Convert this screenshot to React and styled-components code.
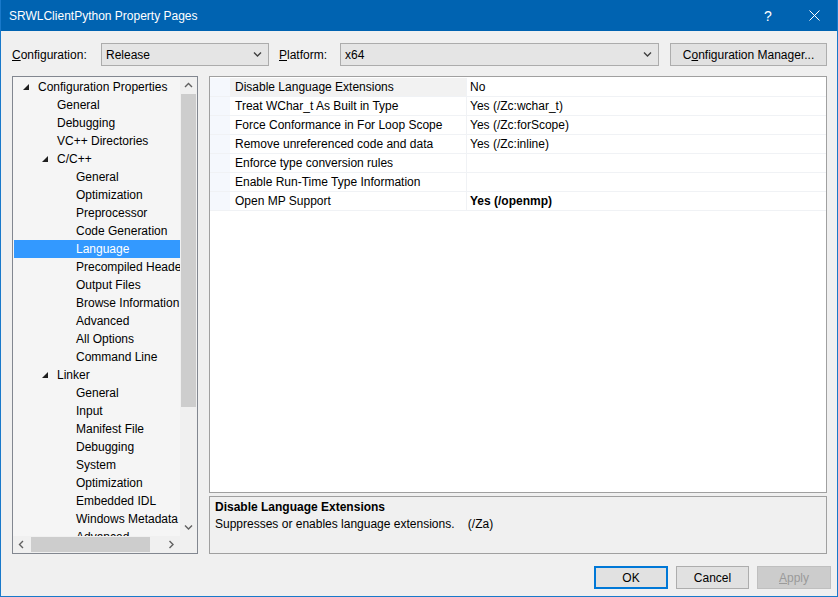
import React from "react";
import styled, { createGlobalStyle } from "styled-components";

const GlobalStyle = createGlobalStyle`
  html, body { margin: 0; padding: 0; background: #f0f0f0; }
  body {
    font-family: "Liberation Sans", Arial, sans-serif;
    font-size: 12px;
    color: #000;
  }
  * { box-sizing: border-box; }
`;

const Window = styled.div`
  width: 838px;
  height: 597px;
  display: flex;
  flex-direction: column;
  background: #f0f0f0;
  border: 1px solid #1979ca;
  border-top: none;
`;

const TitleBar = styled.div`
  height: 31px;
  flex: none;
  display: flex;
  align-items: center;
  background: #0063b1;
  color: #fff;
  padding-left: 8px;
`;

const Title = styled.div`
  flex: 1;
  font-size: 12px;
`;

const CaptionButton = styled.div`
  width: 46px;
  height: 31px;
  display: flex;
  align-items: center;
  justify-content: center;
  font-size: 14px;
  color: #fff;
`;

const Body = styled.div`
  flex: 1;
  display: flex;
  flex-direction: column;
  padding: 12px 6px 0 11px;
`;

const Toolbar = styled.div`
  display: flex;
  align-items: center;
  height: 23px;
`;

const Label = styled.div`
  width: ${(p) => p.$w}px;
  flex: none;
`;

const Combo = styled.div`
  width: ${(p) => p.$w}px;
  height: 23px;
  flex: none;
  display: flex;
  align-items: center;
  justify-content: space-between;
  padding: 0 6px 0 4px;
  background: #e5e5e5;
  border: 1px solid #acacac;
`;

const Gap = styled.div`
  width: ${(p) => p.$w}px;
  flex: none;
`;

const Button = styled.div`
  width: ${(p) => p.$w}px;
  height: 23px;
  flex: none;
  display: flex;
  align-items: center;
  justify-content: center;
  background: ${(p) => (p.$disabled ? "#cccccc" : "#e1e1e1")};
  color: ${(p) => (p.$disabled ? "#9a9a9a" : "#000")};
  border: ${(p) =>
    p.$default ? "2px solid #0078d7" : p.$disabled ? "1px solid #bfbfbf" : "1px solid #adadad"};
`;

const Main = styled.div`
  margin-top: 10px;
  height: 478px;
  display: flex;
  gap: 11px;
`;

const Tree = styled.div`
  width: 186px;
  flex: none;
  border: 1px solid #828790;
  background: #f5f5f5;
  display: grid;
  grid-template-columns: 167px 17px;
  grid-template-rows: 1fr 17px;
  overflow: hidden;
`;

const TreeList = styled.div`
  overflow: hidden;
  padding: 1px 0 0 1px;
`;

const TreeRow = styled.div`
  height: 18px;
  display: flex;
  align-items: center;
  white-space: nowrap;
  padding-left: ${(p) => p.$level * 19}px;
  background: ${(p) => (p.$selected ? "#3399ff" : "transparent")};
  color: ${(p) => (p.$selected ? "#fff" : "#000")};
`;

const Expander = styled.div`
  width: 24px;
  flex: none;
  display: flex;
  align-items: center;
  padding-left: 9px;
  padding-bottom: 1px;
`;

const VScroll = styled.div`
  background: #f0f0f0;
  display: grid;
  grid-template-rows: 17px 1fr 17px;
`;

const HScroll = styled.div`
  background: #f0f0f0;
  display: grid;
  grid-template-columns: 17px 1fr 17px;
`;

const Corner = styled.div`
  background: #f0f0f0;
`;

const Arrow = styled.div`
  display: flex;
  align-items: center;
  justify-content: center;
`;

const Track = styled.div`
  position: relative;
`;

const Thumb = styled.div`
  position: absolute;
  background: #cdcdcd;
  ${(p) =>
    p.$vertical
      ? `left: 1px; right: 1px; top: ${p.$start}px; height: ${p.$size}px;`
      : `top: 1px; bottom: 1px; left: ${p.$start}px; width: ${p.$size}px;`}
`;

const RightColumn = styled.div`
  width: 618px;
  flex: none;
  display: flex;
  flex-direction: column;
  gap: 3px;
`;

const Grid = styled.div`
  height: 417px;
  flex: none;
  background: #fff;
  border: 1px solid #a0a0a0;
  padding-top: 1px;
`;

const PropRow = styled.div`
  display: flex;
  height: 19px;
  border-bottom: 1px solid #f0f2f5;
`;

const Margin = styled.div`
  width: 20px;
  flex: none;
  background: #f5f8fd;
`;

const NameCell = styled.div`
  width: 237px;
  flex: none;
  display: flex;
  align-items: center;
  padding-left: 5px;
  white-space: nowrap;
  background: ${(p) => (p.$active ? "#f2f2f2" : "#fff")};
  border-right: 1px solid #f0f2f5;
`;

const ValueCell = styled.div`
  flex: 1;
  display: flex;
  align-items: center;
  padding-left: 3px;
  white-space: nowrap;
  font-weight: ${(p) => (p.$bold ? "bold" : "normal")};
`;

const Desc = styled.div`
  height: 58px;
  flex: none;
  border: 1px solid #a0a0a0;
  background: #f0f0f0;
  padding: 2px 5px;
  line-height: 17px;
`;

const DescTitle = styled.div`
  font-weight: bold;
`;

const DescText = styled.div`
  white-space: pre;
`;

const Footer = styled.div`
  margin-top: 12px;
  display: flex;
  justify-content: flex-end;
  gap: 8px;
`;

const Chevron = ({ dir = "down", color = "#404040" }) => {
  const paths = {
    down: "M1 1.5 L4.5 5 L8 1.5",
    up: "M1 5 L4.5 1.5 L8 5",
    left: "M5 1 L1.5 4.5 L5 8",
    right: "M1.5 1 L5 4.5 L1.5 8",
  };
  const horiz = dir === "left" || dir === "right";
  return (
    <svg width={horiz ? 7 : 9} height={horiz ? 9 : 7} viewBox={horiz ? "0 0 7 9" : "0 0 9 7"}>
      <path d={paths[dir]} fill="none" stroke={color} strokeWidth="1.4" />
    </svg>
  );
};

const Triangle = () => (
  <svg width="6" height="6" viewBox="0 0 6 6">
    <polygon points="6,0 6,6 0,6" fill="#1e1e1e" />
  </svg>
);

const treeItems = [
  [0, "Configuration Properties", true],
  [1, "General"],
  [1, "Debugging"],
  [1, "VC++ Directories"],
  [1, "C/C++", true],
  [2, "General"],
  [2, "Optimization"],
  [2, "Preprocessor"],
  [2, "Code Generation"],
  [2, "Language"],
  [2, "Precompiled Headers"],
  [2, "Output Files"],
  [2, "Browse Information"],
  [2, "Advanced"],
  [2, "All Options"],
  [2, "Command Line"],
  [1, "Linker", true],
  [2, "General"],
  [2, "Input"],
  [2, "Manifest File"],
  [2, "Debugging"],
  [2, "System"],
  [2, "Optimization"],
  [2, "Embedded IDL"],
  [2, "Windows Metadata"],
  [2, "Advanced"],
  [2, "All Options"],
];

const props = [
  ["Disable Language Extensions", "No"],
  ["Treat WChar_t As Built in Type", "Yes (/Zc:wchar_t)"],
  ["Force Conformance in For Loop Scope", "Yes (/Zc:forScope)"],
  ["Remove unreferenced code and data", "Yes (/Zc:inline)"],
  ["Enforce type conversion rules", ""],
  ["Enable Run-Time Type Information", ""],
  ["Open MP Support", "Yes (/openmp)", true],
];

export default function App() {
  return (
    <>
      <GlobalStyle />
      <Window>
        <TitleBar>
          <Title>SRWLClientPython Property Pages</Title>
          <CaptionButton>?</CaptionButton>
          <CaptionButton>
            <svg width="11" height="11" viewBox="0 0 11 11">
              <path d="M0.5 0.5 L10.5 10.5 M10.5 0.5 L0.5 10.5" stroke="#fff" strokeWidth="1" />
            </svg>
          </CaptionButton>
        </TitleBar>
        <Body>
          <Toolbar>
            <Label $w={89}>
              <u>C</u>onfiguration:
            </Label>
            <Combo $w={168}>
              <span>Release</span>
              <Chevron />
            </Combo>
            <Gap $w={10} />
            <Label $w={61}>
              <u>P</u>latform:
            </Label>
            <Combo $w={319}>
              <span>x64</span>
              <Chevron />
            </Combo>
            <Gap $w={11} />
            <Button $w={157}>
              C<u>o</u>nfiguration Manager...
            </Button>
          </Toolbar>

          <Main>
            <Tree>
              <TreeList>
                {treeItems.map(([level, text, open], i) => (
                  <TreeRow key={i} $level={level} $selected={i === 9}>
                    <Expander>{open && <Triangle />}</Expander>
                    {text}
                  </TreeRow>
                ))}
              </TreeList>
              <VScroll>
                <Arrow>
                  <Chevron dir="up" color="#606060" />
                </Arrow>
                <Track>
                  <Thumb $vertical $start={0} $size={313} />
                </Track>
                <Arrow>
                  <Chevron dir="down" color="#606060" />
                </Arrow>
              </VScroll>
              <HScroll>
                <Arrow>
                  <Chevron dir="left" color="#606060" />
                </Arrow>
                <Track>
                  <Thumb $start={1} $size={119} />
                </Track>
                <Arrow>
                  <Chevron dir="right" color="#606060" />
                </Arrow>
              </HScroll>
              <Corner />
            </Tree>

            <RightColumn>
              <Grid>
                {props.map(([name, value, bold], i) => (
                  <PropRow key={i}>
                    <Margin />
                    <NameCell $active={i === 0}>{name}</NameCell>
                    <ValueCell $bold={bold}>{value}</ValueCell>
                  </PropRow>
                ))}
              </Grid>
              <Desc>
                <DescTitle>Disable Language Extensions</DescTitle>
                <DescText>{"Suppresses or enables language extensions.    (/Za)"}</DescText>
              </Desc>
            </RightColumn>
          </Main>

          <Footer>
            <Button $w={74} $default>
              OK
            </Button>
            <Button $w={73}>Cancel</Button>
            <Button $w={74} $disabled>
              <u>A</u>pply
            </Button>
          </Footer>
        </Body>
      </Window>
    </>
  );
}
